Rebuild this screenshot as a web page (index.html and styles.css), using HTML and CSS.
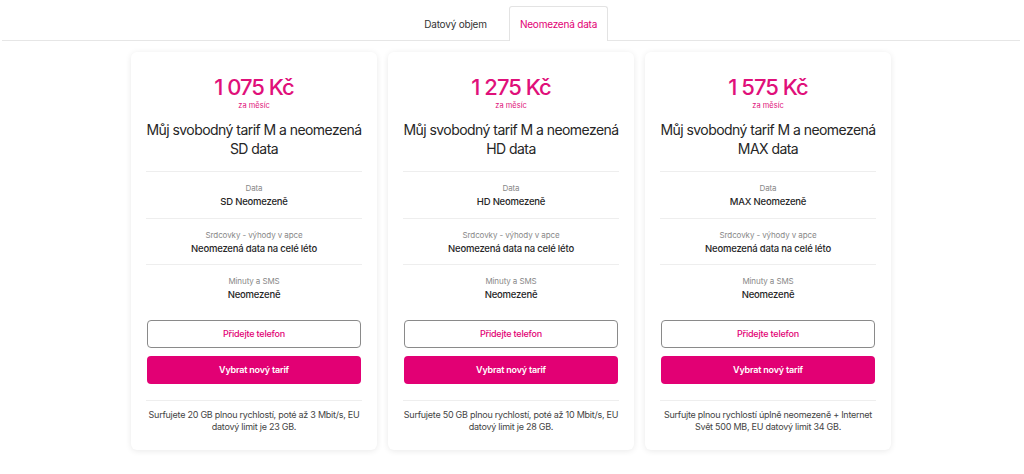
FILE: index.html
```html
<!DOCTYPE html>
<html lang="cs">
<head>
<meta charset="utf-8">
<link rel="stylesheet" href="styles.css">
</head>
<body>
<div class="tabs">
  <div class="tab">Datový objem</div>
  <div class="tab active">Neomezená data</div>
</div>
<div class="cards">
  <div class="card">
    <div class="price">1 075 Kč</div>
    <div class="per">za měsíc</div>
    <div class="title">Můj svobodný tarif M a neomezená<br>SD data</div>
    <div class="row"><div class="lbl">Data</div><div class="val">SD Neomezeně</div></div>
    <div class="row"><div class="lbl">Srdcovky - výhody v apce</div><div class="val">Neomezená data na celé léto</div></div>
    <div class="row last"><div class="lbl">Minuty a SMS</div><div class="val">Neomezeně</div></div>
    <div class="btns">
      <div class="btn outline">Přidejte telefon</div>
      <div class="btn fill">Vybrat nový tarif</div>
    </div>
    <div class="note">Surfujete 20 GB plnou rychlostí, poté až 3 Mbit/s, EU datový limit je 23 GB.</div>
  </div>
  <div class="card">
    <div class="price">1 275 Kč</div>
    <div class="per">za měsíc</div>
    <div class="title">Můj svobodný tarif M a neomezená<br>HD data</div>
    <div class="row"><div class="lbl">Data</div><div class="val">HD Neomezeně</div></div>
    <div class="row"><div class="lbl">Srdcovky - výhody v apce</div><div class="val">Neomezená data na celé léto</div></div>
    <div class="row last"><div class="lbl">Minuty a SMS</div><div class="val">Neomezeně</div></div>
    <div class="btns">
      <div class="btn outline">Přidejte telefon</div>
      <div class="btn fill">Vybrat nový tarif</div>
    </div>
    <div class="note">Surfujete 50 GB plnou rychlostí, poté až 10 Mbit/s, EU datový limit je 28 GB.</div>
  </div>
  <div class="card">
    <div class="price">1 575 Kč</div>
    <div class="per">za měsíc</div>
    <div class="title">Můj svobodný tarif M a neomezená<br>MAX data</div>
    <div class="row"><div class="lbl">Data</div><div class="val">MAX Neomezeně</div></div>
    <div class="row"><div class="lbl">Srdcovky - výhody v apce</div><div class="val">Neomezená data na celé léto</div></div>
    <div class="row last"><div class="lbl">Minuty a SMS</div><div class="val">Neomezeně</div></div>
    <div class="btns">
      <div class="btn outline">Přidejte telefon</div>
      <div class="btn fill">Vybrat nový tarif</div>
    </div>
    <div class="note">Surfujte plnou rychlostí úplně neomezeně + Internet Svět 500 MB, EU datový limit 34 GB.</div>
  </div>
</div>
</body>
</html>
```
FILE: styles.css
```css
* { box-sizing: border-box; }
html, body { margin: 0; padding: 0; background: #fff; }
body {
  width: 1024px;
  height: 474px;
  overflow: hidden;
  font-family: Inter, "Open Sans", sans-serif;
  color: #262626;
}
.tabs {
  display: flex;
  justify-content: center;
  margin: 0 4px 0 2px;
  padding-top: 6px;
  padding-right: 12px;
  border-bottom: 1px solid #e6e6e6;
}
.tab {
  width: 99px;
  height: 34px;
  display: flex;
  align-items: center;
  justify-content: center;
  font-size: 10px;
  color: #333;
  border: 1px solid transparent;
  border-bottom: none;
  margin-bottom: -1px;
  letter-spacing: -0.2px;
}
.tab:first-child { width: 107px; }
.tab.active {
  color: #e20074;
  border-color: #e3e3e3;
  background: #fff;
  border-radius: 3px 3px 0 0;
  height: 35px;
  padding-bottom: 1px;
}
.cards {
  display: flex;
  justify-content: center;
  gap: 11px;
  padding-top: 11px;
  padding-right: 2px;
}
.card {
  width: 246px;
  height: 398px;
  background: #fff;
  border-radius: 6px;
  box-shadow: 0 1px 6px rgba(0,0,0,0.09);
  padding: 0 15px;
  display: flex;
  flex-direction: column;
  align-items: stretch;
  text-align: center;
}
.price {
  margin-top: 21px;
  font-size: 22px;
  font-weight: 500;
  color: #e0107a;
  letter-spacing: -1px;
  line-height: 28px;
}
.per {
  font-size: 7.5px;
  color: #e0107a;
  line-height: 10px;
}
.title {
  font-size: 14px;
  line-height: 19px;
  margin-top: 9px;
  padding: 0 0 13px;
  color: #262626;
  letter-spacing: -0.55px;
  white-space: nowrap;
  border-bottom: 1px solid #eeeeee;
}
.row {
  padding: 10px 0 8.5px;
  border-bottom: 1px solid #eeeeee;
}
.row.last { border-bottom: none; }
.lbl {
  font-size: 8px;
  color: #888;
  line-height: 12px;
  letter-spacing: -0.1px;
}
.val {
  font-size: 9.5px;
  color: #262626;
  line-height: 14px;
  margin-top: 1px;
  font-weight: 500;
  letter-spacing: -0.2px;
}
.btns {
  display: flex;
  flex-direction: column;
  gap: 8px;
  margin-top: 9px;
  padding: 0 1px 16px;
  border-bottom: 1px solid #eeeeee;
}
.btn {
  height: 28px;
  border-radius: 4px;
  display: flex;
  align-items: center;
  justify-content: center;
  font-size: 9px;
  font-weight: 600;
  letter-spacing: -0.2px;
}
.btn.outline {
  border: 1px solid #8a8a8a;
  color: #e20074;
  font-weight: 500;
}
.btn.fill {
  background: #e20074;
  color: #fff;
}
.note {
  font-size: 9px;
  line-height: 12px;
  color: #444;
  padding: 8px 0 0;
  letter-spacing: -0.25px;
}
```
